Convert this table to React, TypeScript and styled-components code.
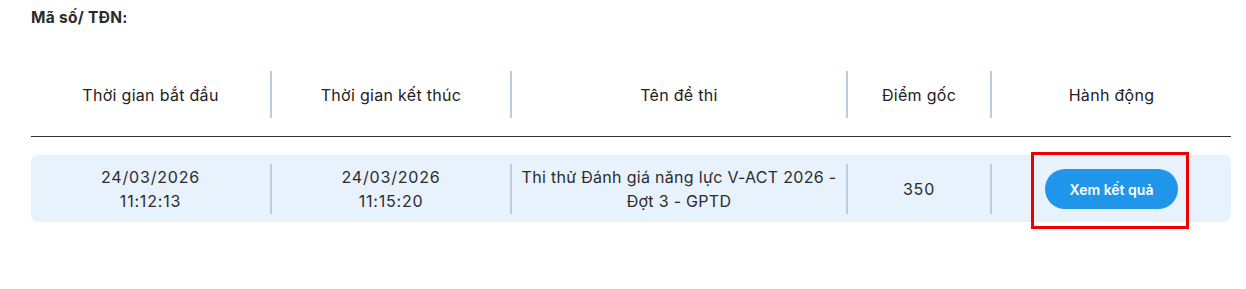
import React from "react";
import styled, { createGlobalStyle } from "styled-components";

const Global = createGlobalStyle`
  html, body { margin: 0; padding: 0; background: #fff; }
  body { font-family: Inter, "Noto Sans", sans-serif; color: #2b2b2b; }
`;

const Page = styled.div`
  box-sizing: border-box;
  min-height: 289px;
  padding: 8px 15px 0 31px;
  width: 1246px;
`;

const Title = styled.div`
  font-size: 15.5px;
  font-weight: 700;
  line-height: 20px;
  letter-spacing: 0.3px;
  color: #2b2b2b;
`;

const Grid = styled.div`
  display: grid;
  grid-template-columns: 239px 240px 336px 144px 241px;
  width: 1200px;
`;

const HeadRow = styled(Grid)`
  margin-top: 43px;
  padding-bottom: 18px;
  border-bottom: 1px solid #333;
`;

const HeadCell = styled.div<{ $first?: boolean }>`
  height: 47px;
  display: flex;
  align-items: center;
  justify-content: center;
  font-size: 16px;
  letter-spacing: 0.3px;
  color: #222;
  border-left: ${(p) => (p.$first ? "none" : "2px solid #bccbdd")};
`;

const BodyRow = styled(Grid)`
  margin-top: 18px;
  background: #e8f2fd;
  border-radius: 7px;
  padding: 9px 0 8px;
`;

const Cell = styled.div<{ $first?: boolean }>`
  min-height: 50px;
  display: flex;
  flex-direction: column;
  align-items: center;
  justify-content: center;
  text-align: center;
  font-size: 16px;
  letter-spacing: 0.3px;
  line-height: 24px;
  color: #2b2b2b;
  border-left: ${(p) => (p.$first ? "none" : "2px solid #bccbdd")};
`;

const Digits = styled.span`
  letter-spacing: 0.8px;
`;

const ActionWrap = styled.div`
  position: relative;
  display: flex;
  align-items: center;
  justify-content: center;
`;

const Highlight = styled.div`
  position: absolute;
  left: -14px;
  right: -11px;
  top: -17px;
  bottom: -20px;
  border: 3px solid #ee0000;
  pointer-events: none;
`;

const Button = styled.button`
  width: 133px;
  height: 40px;
  border: none;
  border-radius: 20px;
  background: #1f96ea;
  color: #fff;
  font-family: Inter, "Noto Sans", sans-serif;
  font-size: 14px;
  font-weight: 600;
  cursor: pointer;
`;

export default function App() {
  return (
    <>
      <Global />
      <Page>
        <Title>Mã số/ TĐN:</Title>
        <HeadRow>
          <HeadCell $first>Thời gian bắt đầu</HeadCell>
          <HeadCell>Thời gian kết thúc</HeadCell>
          <HeadCell>Tên đề thi</HeadCell>
          <HeadCell>Điểm gốc</HeadCell>
          <HeadCell>Hành động</HeadCell>
        </HeadRow>
        <BodyRow>
          <Cell $first>
            <Digits>24/03/2026</Digits>
            <Digits>11:12:13</Digits>
          </Cell>
          <Cell>
            <Digits>24/03/2026</Digits>
            <Digits>11:15:20</Digits>
          </Cell>
          <Cell>
            <span>Thi thử Đánh giá năng lực V-ACT 2026 -</span>
            <span>Đợt 3 - GPTD</span>
          </Cell>
          <Cell>
            <Digits>350</Digits>
          </Cell>
          <Cell>
            <ActionWrap>
              <Button>Xem kết quả</Button>
              <Highlight />
            </ActionWrap>
          </Cell>
        </BodyRow>
      </Page>
    </>
  );
}
